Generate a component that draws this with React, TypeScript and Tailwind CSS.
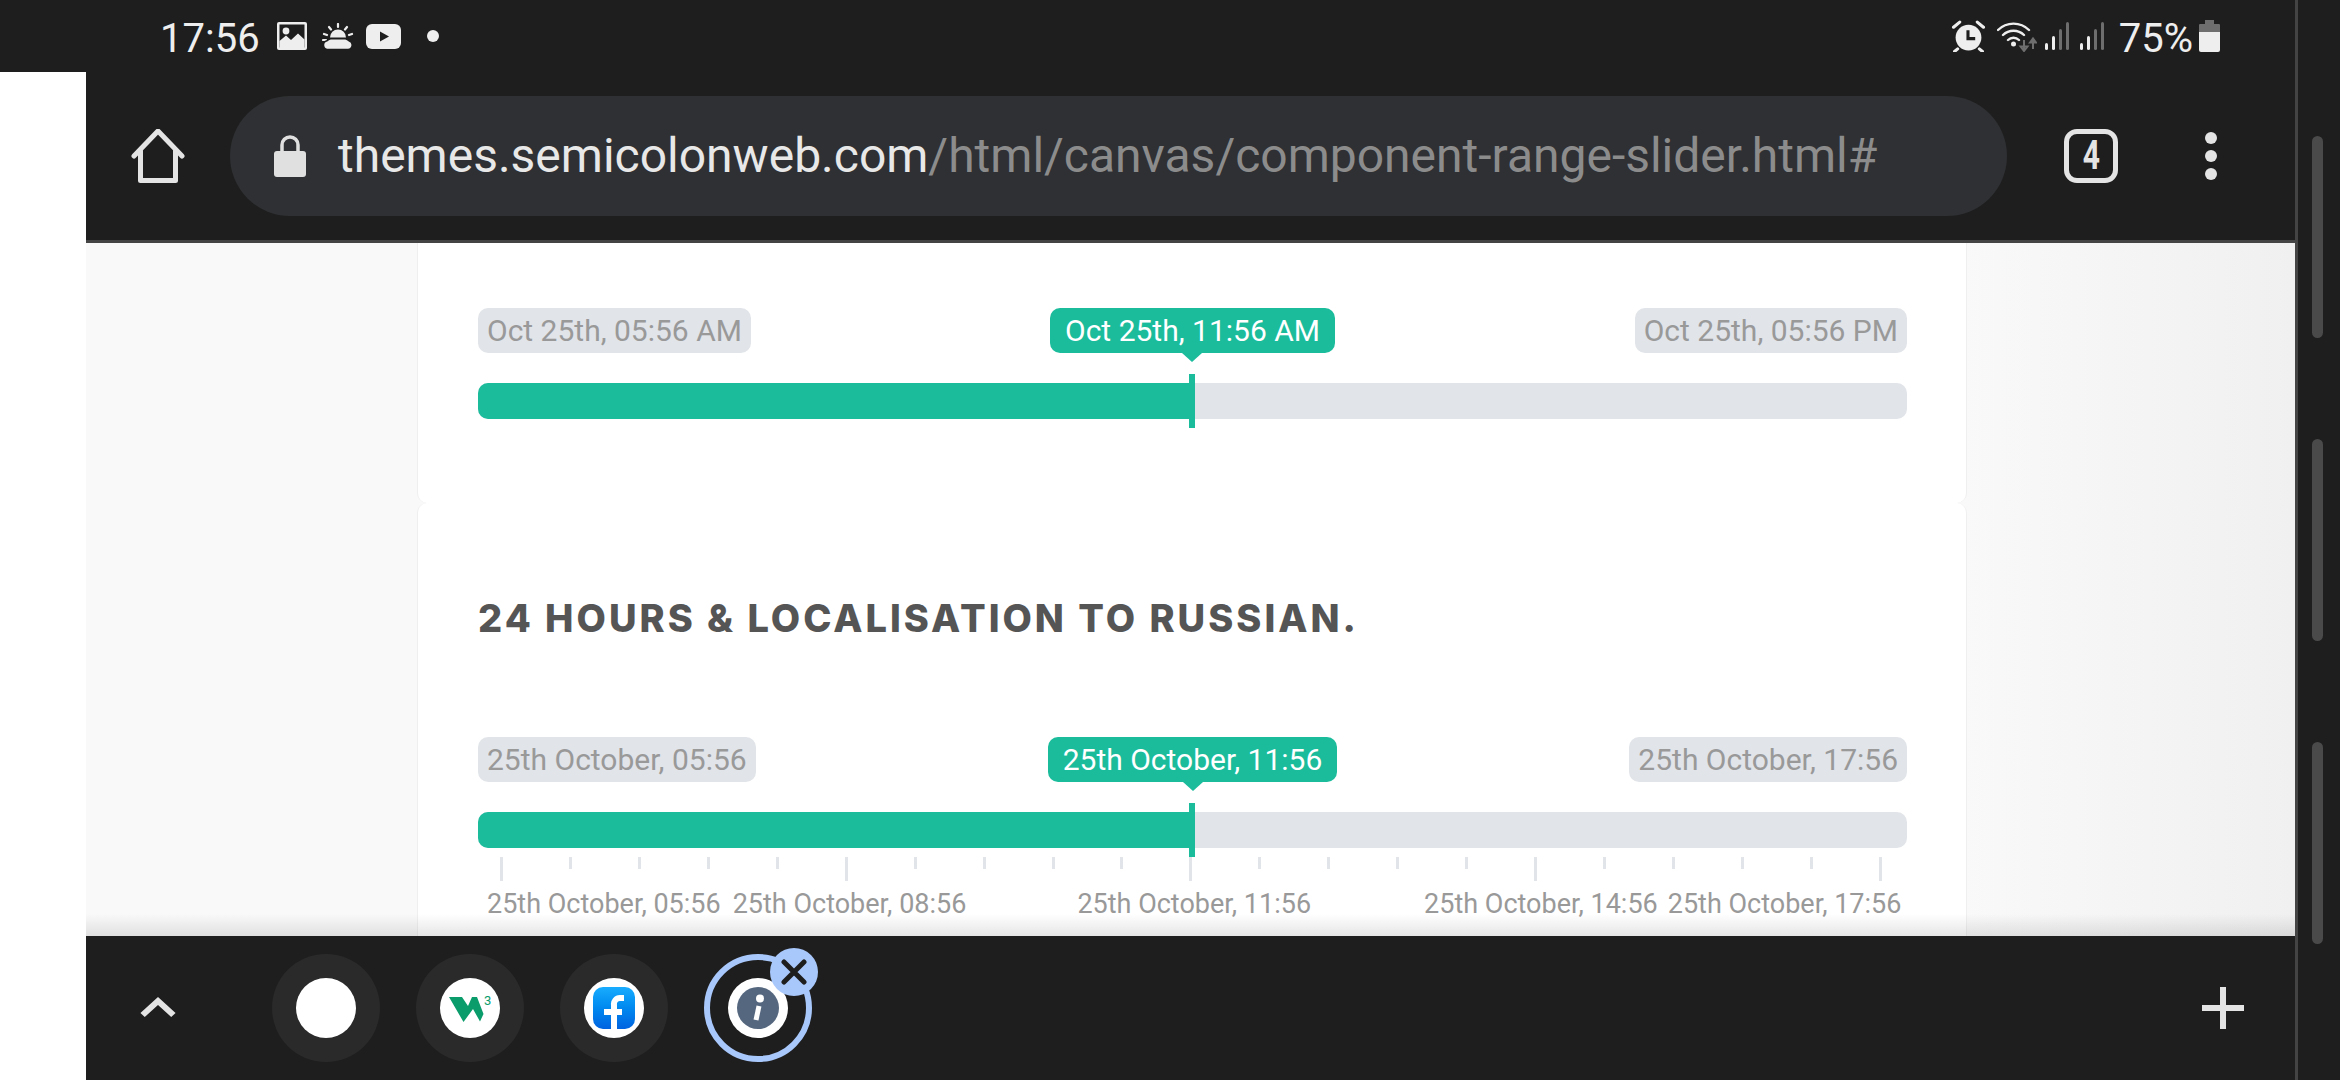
import { ChevronUp, Plus } from "lucide-react";

const MINOR_TICKS = Array.from({ length: 21 }, (_, i) => i);

function Tag({ label, active }: { label: string; active?: boolean }) {
  if (active) {
    return (
      <div className="relative h-[45px] rounded-[10px] bg-[#1abc9c] px-[15px] text-[30px] leading-[45px] whitespace-nowrap text-white">
        {label}
        <div className="absolute top-[45px] left-1/2 -ml-[10px] h-0 w-0 border-x-[10px] border-t-[9px] border-x-transparent border-t-[#1abc9c]" />
      </div>
    );
  }
  return (
    <div className="h-[45px] rounded-[10px] bg-[#e1e4e9] px-[9px] text-[30px] leading-[45px] whitespace-nowrap text-[#999999]">
      {label}
    </div>
  );
}

function RangeSlider({ from, value, to }: { from: string; value: string; to: string }) {
  return (
    <div className="w-[1429px]">
      <div className="grid grid-cols-[1fr_auto_1fr]">
        <div className="justify-self-start">
          <Tag label={from} />
        </div>
        <Tag label={value} active />
        <div className="justify-self-end">
          <Tag label={to} />
        </div>
      </div>
      <div className="relative mt-[30px] h-[36px] rounded-[10px] bg-[#e1e4e9]">
        <div className="h-full w-[714px] rounded-l-[10px] bg-[#1abc9c]" />
        <div className="absolute top-[-9px] left-[711px] h-[54px] w-[6px] bg-[#1abc9c]" />
      </div>
    </div>
  );
}

function StatusLeftIcons() {
  return (
    <div className="ml-[17px] flex items-center">
      <svg width="30" height="28" viewBox="0 0 30 28">
        <rect width="30" height="28" rx="2" fill="#eeeeee" />
        <rect x="2.5" y="2.5" width="25" height="23" fill="#1e1e1e" />
        <circle cx="9" cy="9" r="3.4" fill="#eeeeee" />
        <path d="M2.5 19 9 13.5l5 4.5 7-6.5 6.5 6V27h-25z" fill="#eeeeee" />
      </svg>
      <svg className="ml-[15px]" width="32" height="27" viewBox="0 0 32 27" fill="none" stroke="#eeeeee" strokeLinecap="round">
        <path d="M16 1v3M7 4l2 2.5M25 4l-2 2.5M2 11l3 1M30 11l-3 1" strokeWidth="2.2" />
        <path d="M8 14.5a8 8 0 0 1 16 0z" fill="#eeeeee" stroke="none" />
        <path d="M1 17h3" strokeWidth="2.2" />
        <path d="M5 26.500h21a4.500 4.500 0 0 0 1-8.800 8 8 0 0 0-3.500-2H8.500a7 7 0 0 0-3.500 2 4.500 4.500 0 0 0 0 8.800z" fill="#eeeeee" stroke="#1e1e1e" strokeWidth="1.600" />
      </svg>
      <svg className="ml-[12px]" width="35" height="25" viewBox="0 0 35 25">
        <rect width="35" height="25" rx="6" fill="#eeeeee" />
        <path d="M14 7.500v10l9-5z" fill="#1e1e1e" />
      </svg>
      <div className="ml-[26px] h-[12px] w-[12px] rounded-full bg-[#eeeeee]" />
    </div>
  );
}

function SignalIcon() {
  return (
    <div className="flex h-[28px] items-end gap-[4px]">
      <div className="h-[7px] w-[3px] rounded-[2px] bg-[#eeeeee]" />
      <div className="h-[14px] w-[3px] rounded-[2px] bg-[#eeeeee]" />
      <div className="h-[21px] w-[3px] rounded-[2px] bg-[#6e6e6e]" />
      <div className="h-[28px] w-[3px] rounded-[2px] bg-[#6e6e6e]" />
    </div>
  );
}

function StatusRightIcons() {
  return (
    <div className="flex items-center">
      <svg width="35" height="32" viewBox="0 0 33 31" fill="none">
        <circle cx="16.500" cy="17" r="12.500" fill="#eeeeee" />
        <path d="M16 10v8h7" stroke="#1e1e1e" strokeWidth="3" />
        <path d="M2 7l6-5M31 7l-6-5M6 28l-3 2.500M27 28l3 2.500" stroke="#eeeeee" strokeWidth="3" strokeLinecap="round" />
      </svg>
      <svg className="ml-[11px]" width="40" height="31" viewBox="0 0 40 31" fill="none">
        <path d="M1 9a22 22 0 0 1 31 0M6 14a15 15 0 0 1 21 0M11 19a8 8 0 0 1 11 0" stroke="#eeeeee" strokeWidth="2.400" strokeLinecap="round" />
        <circle cx="16.500" cy="23" r="2.500" fill="#eeeeee" />
        <path d="M27 19v10M23.500 25.500 27 30l3.500-4.500z" stroke="#6e6e6e" strokeWidth="2" />
        <path d="M36 28V18M33 21.500l3-4 3 4z" stroke="#6e6e6e" strokeWidth="2" />
      </svg>
      <div className="ml-[8px]">
        <SignalIcon />
      </div>
      <div className="ml-[11px]">
        <SignalIcon />
      </div>
      <span className="mt-[5px] ml-[15px] text-[40px] leading-[48px] text-[#eeeeee]">75%</span>
      <svg className="ml-[6px]" width="21" height="32" viewBox="0 0 21 32">
        <path d="M6 0h9v4h5a1 1 0 0 1 1 1v7H0V5a1 1 0 0 1 1-1h5z" fill="#6e6e6e" />
        <path d="M0 12h21v18a2 2 0 0 1-2 2H2a2 2 0 0 1-2-2z" fill="#eeeeee" />
      </svg>
    </div>
  );
}

function TabCircle({ children }: { children: React.ReactNode }) {
  return (
    <div className="flex h-[108px] w-[108px] items-center justify-center rounded-full bg-[#2a2a2a]">
      <div className="flex h-[60px] w-[60px] items-center justify-center rounded-full bg-white">{children}</div>
    </div>
  );
}

export default function App() {
  return (
    <div className="flex h-[1080px] w-[2340px] overflow-hidden bg-[#1e1e1e] font-[Roboto,sans-serif]">
      <div className="flex w-[2295px] flex-col">
        {/* status bar */}
        <div className="flex h-[72px] shrink-0 items-center justify-between pr-[75px] pl-[160px] text-[#eeeeee]">
          <div className="flex items-center">
            <span className="mt-[5px] text-[40px] leading-[48px]">17:56</span>
            <StatusLeftIcons />
          </div>
          <StatusRightIcons />
        </div>

        <div className="flex min-h-0 flex-1">
          <div className="w-[86px] shrink-0 bg-white" />
          <div className="flex min-w-0 flex-1 flex-col">
            {/* browser toolbar */}
            <div className="flex h-[171px] shrink-0 items-center border-b-[3px] border-[#444444]">
              <div className="ml-[45px] flex h-[54px] w-[54px] items-center justify-center">
                <svg width="54" height="54" viewBox="0 0 54 54" fill="none" stroke="#e4e4e4" strokeWidth="5" strokeLinejoin="round" strokeLinecap="round">
                  <path d="M3 27 27 2l24 25" />
                  <path d="M9.500 22v29.500h35V22" />
                </svg>
              </div>
              <div className="ml-[45px] flex h-[120px] w-[1777px] items-center rounded-full bg-[#2f3033] pl-[44px]">
                <svg width="32" height="42" viewBox="0 0 32 42">
                  <path d="M8 18V10a8 8 0 0 1 16 0v8" fill="none" stroke="#e0e0e0" strokeWidth="3.500" />
                  <rect y="16" width="32" height="26" rx="3" fill="#e0e0e0" />
                </svg>
                <div className="ml-[32px] text-[48px] leading-[56px] whitespace-nowrap text-[#8c8c8c]">
                  <span className="text-[#e8e8e8]">themes.semicolonweb.com</span>/html/canvas/component-range-slider.html#
                </div>
              </div>
              <div className="ml-[57px] flex h-[54px] w-[54px] items-center justify-center rounded-[13px] border-[5px] border-[#e4e4e4] text-[40px] leading-none font-bold text-[#e4e4e4]">
                <span className="scale-x-75">4</span>
              </div>
              <div className="ml-[87px] flex flex-col gap-[6px]">
                <div className="h-[12px] w-[12px] rounded-full bg-[#e4e4e4]" />
                <div className="h-[12px] w-[12px] rounded-full bg-[#e4e4e4]" />
                <div className="h-[12px] w-[12px] rounded-full bg-[#e4e4e4]" />
              </div>
            </div>

            {/* page */}
            <div className="relative min-h-0 flex-1 overflow-hidden bg-gradient-to-r from-[#f9f9f9] via-[#f9f9f9] via-[85%] to-[#f0f0f0]">
              <div className="ml-[331px] w-[1550px]">
                <div className="h-[260px] rounded-b-[10px] border-x border-[#efefef] bg-white pt-[65px] pl-[60px]">
                  <RangeSlider from="Oct 25th, 05:56 AM" value="Oct 25th, 11:56 AM" to="Oct 25th, 05:56 PM" />
                </div>
                <div className="rounded-t-[10px] border-x border-[#efefef] bg-white pt-[95px] pb-[60px] pl-[60px]">
                  <h3 className="h-[40px] font-[Inter,sans-serif] text-[38px] leading-[40px] font-extrabold tracking-[3px] whitespace-nowrap text-[#555555]">
                    24 HOURS &amp; LOCALISATION TO RUSSIAN.
                  </h3>
                  <div className="mt-[99px]">
                    <RangeSlider from="25th October, 05:56" value="25th October, 11:56" to="25th October, 17:56" />
                  </div>
                  <div className="mt-[9px] flex w-[1429px] items-start justify-between pr-[25px] pl-[22px]">
                    {MINOR_TICKS.map((i) => (
                      <div key={i} className={i % 5 === 0 ? "h-[24px] w-[3px] bg-[#e1e4e9]" : "h-[12px] w-[3px] bg-[#e1e4e9]"} />
                    ))}
                  </div>
                  <div className="mt-[8px] flex pl-[9px] text-[27px] leading-[30px] whitespace-nowrap text-[#999999]">
                    <span>25th October, 05:56</span>
                    <span className="ml-[12px]">25th October, 08:56</span>
                    <span className="ml-[111px]">25th October, 11:56</span>
                    <span className="ml-[113px]">25th October, 14:56</span>
                    <span className="ml-[10px]">25th October, 17:56</span>
                  </div>
                </div>
              </div>
              <div className="absolute inset-x-0 bottom-0 h-[22px] bg-gradient-to-b from-transparent to-black/10" />
            </div>

            {/* tab strip */}
            <div className="flex h-[144px] shrink-0 items-center justify-between pr-[36px] pl-[44px]">
              <div className="flex items-center">
                <ChevronUp size={56} strokeWidth={2.400} color="#e4e4e4" strokeLinecap="butt" strokeLinejoin="miter" className="scale-x-[1.1]" />
                <div className="ml-[86px] flex gap-[36px]">
                  <TabCircle>{null}</TabCircle>
                  <TabCircle>
                    <svg width="60" height="60" viewBox="0 0 60 60">
                      <path d="M9 19h13l6 9 4-9h5l6.500 17-3.500 7.500-7-12.500-9.500 13z" fill="#0b9c6c" />
                      <text x="44" y="27" fontSize="13" fill="#0b9c6c" fontFamily="Roboto, sans-serif">3</text>
                    </svg>
                  </TabCircle>
                  <TabCircle>
                    <div className="flex h-[42px] w-[42px] items-end justify-center overflow-hidden rounded-[10px] bg-gradient-to-b from-[#18acfe] to-[#0163e0]">
                      <svg width="26" height="36" viewBox="0 0 26 36" fill="none" stroke="white" strokeWidth="6">
                        <path d="M13 36V12a6 6 0 0 1 6-7h4" />
                        <path d="M3 19h18" />
                      </svg>
                    </div>
                  </TabCircle>
                  <div className="relative flex h-[108px] w-[108px] items-center justify-center rounded-full border-[6px] border-[#a8c7fa]">
                    <div className="flex h-[60px] w-[60px] items-center justify-center rounded-full bg-white">
                      <svg width="42" height="42" viewBox="0 0 42 42">
                        <circle cx="21" cy="21" r="21" fill="#55677f" />
                        <circle cx="23" cy="11.500" r="4" fill="white" />
                        <path d="M22 19l-3 14" stroke="white" strokeWidth="5" />
                      </svg>
                    </div>
                    <div className="absolute -top-[12px] -right-[12px] flex h-[48px] w-[48px] items-center justify-center rounded-full bg-[#a8c7fa]">
                      <svg width="26" height="26" viewBox="0 0 26 26" stroke="#1e1e1e" strokeWidth="5" strokeLinecap="round">
                        <path d="M3 3l20 20M23 3 3 23" />
                      </svg>
                    </div>
                  </div>
                </div>
              </div>
              <Plus size={72} strokeWidth={2} color="#e4e4e4" strokeLinecap="butt" />
            </div>
          </div>
        </div>
      </div>

      {/* outer scroll rail */}
      <div className="flex h-full w-[45px] flex-col gap-[101px] border-l-[3px] border-[#444444] pt-[136px] pl-[14px]">
        <div className="h-[202px] w-[11px] rounded-full bg-[#4a4a4a]" />
        <div className="h-[202px] w-[11px] rounded-full bg-[#4a4a4a]" />
        <div className="h-[202px] w-[11px] rounded-full bg-[#4a4a4a]" />
      </div>
    </div>
  );
}
